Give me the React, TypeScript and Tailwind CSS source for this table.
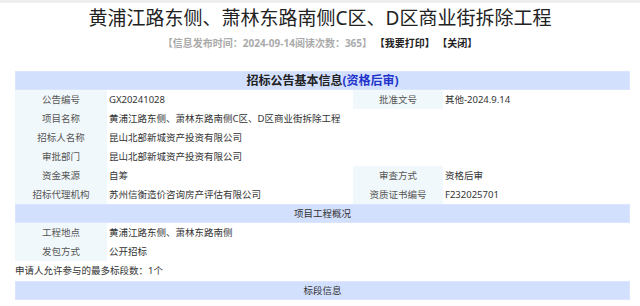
import React from 'react';

const font = "font-['Noto_Sans','Noto_Sans_CJK_SC',sans-serif]";

const Label: React.FC<{ children: React.ReactNode }> = ({ children }) => (
  <div className="bg-[#f1f8fb] text-center text-[#555] h-[19px] leading-[19px]">{children}</div>
);

const Value: React.FC<{ children?: React.ReactNode; span?: boolean }> = ({ children, span }) => (
  <div className={`${span ? 'col-span-3' : ''} pl-[2px] text-[#333] h-[19px] leading-[19px] whitespace-nowrap`}>{children}</div>
);

const Section: React.FC<{ children: React.ReactNode }> = ({ children }) => (
  <div className="col-span-4 h-[19px] leading-[18px] bg-[#d2dffd] border border-[#dbe5fe] text-center text-[#333]">{children}</div>
);

export default function App() {
  return (
    <div className={`w-[640px] h-[306px] bg-white overflow-hidden ${font}`}>
      <div className="h-[3px] bg-[#eeeeee]" />
      <h1 className="h-[30px] leading-[30px] text-center text-[19px] text-[#222]">黄浦江路东侧、萧林东路南侧C区、D区商业街拆除工程</h1>
      <div className="mt-[3px] h-[14px] leading-[14px] text-center text-[10px] font-bold">
        <span className="text-[#aaa]">【信息发布时间：2024-09-14阅读次数：365】</span>
        <span className="text-[#222]"> 【我要打印】</span>
        <span className="text-[#222]"> 【关闭】</span>
      </div>

      <div className="mx-[15px] mt-[21px] w-[615px] grid grid-cols-[92px_246px_90px_1fr] text-[9.5px]">
        <div className="col-span-4 h-[19px] leading-[18px] bg-[#d2dffd] border border-[#dbe5fe] text-center text-[12px] font-bold text-[#222]">
          招标公告基本信息<span className="text-[#2233cc]">(资格后审)</span>
        </div>

        <Label>公告编号</Label>
        <Value>GX20241028</Value>
        <Label>批准文号</Label>
        <Value>其他-2024.9.14</Value>

        <Label>项目名称</Label>
        <Value span>黄浦江路东侧、萧林东路南侧C区、D区商业街拆除工程</Value>

        <Label>招标人名称</Label>
        <Value span>昆山北部新城资产投资有限公司</Value>

        <Label>审批部门</Label>
        <Value span>昆山北部新城资产投资有限公司</Value>

        <Label>资金来源</Label>
        <Value>自筹</Value>
        <Label>审查方式</Label>
        <Value>资格后审</Value>

        <Label>招标代理机构</Label>
        <Value>苏州信衡造价咨询房产评估有限公司</Value>
        <Label>资质证书编号</Label>
        <Value>F232025701</Value>

        <Section>项目工程概况</Section>

        <Label>工程地点</Label>
        <Value span>黄浦江路东侧、萧林东路南侧</Value>

        <Label>发包方式</Label>
        <Value span>公开招标</Value>

        <div className="col-span-4 h-[20px] leading-[20px] text-[#333]">申请人允许参与的最多标段数：1个</div>

        <Section>标段信息</Section>
      </div>
    </div>
  );
}
